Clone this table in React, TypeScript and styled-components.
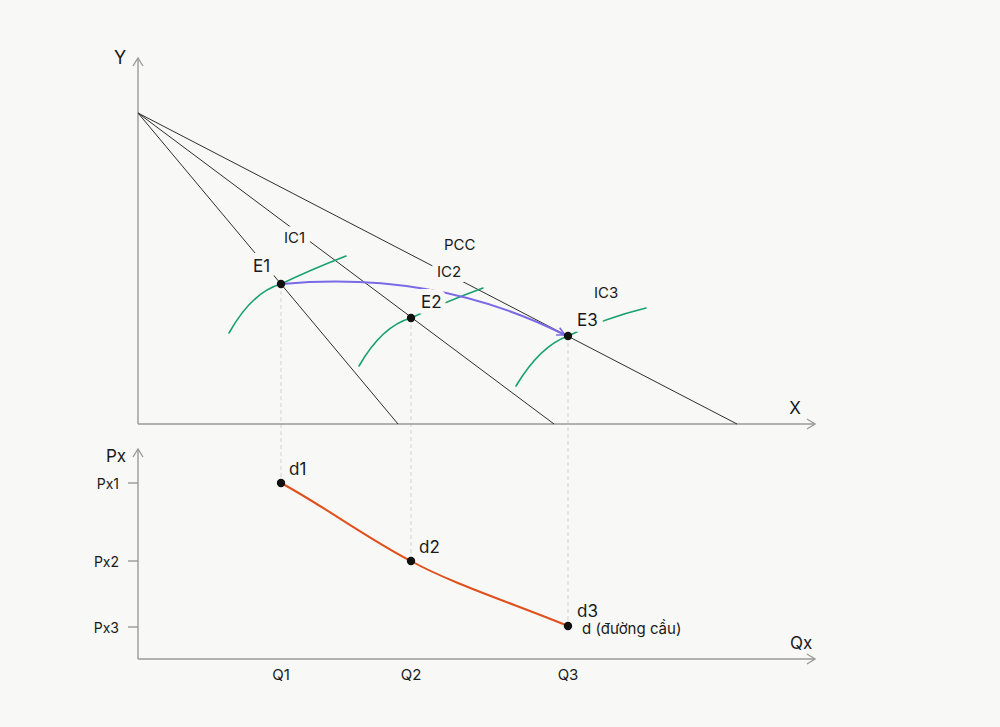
import React from 'react';
import styled, { createGlobalStyle } from 'styled-components';

const BG = '#f8f8f6';

const colors = {
    axis: '#9a9a9a',
    line: '#2e2e2e',
    guide: '#d2d2d2',
    ic: '#17a070',
    pcc: '#7a6ae6',
    demand: '#e0501c',
    dot: '#111111',
    text: '#1a1a1a',
};

const GlobalStyle = createGlobalStyle`
    html, body {
        margin: 0;
        padding: 0;
        background: ${BG};
    }
    body {
        font-family: Inter, "Noto Sans", "Liberation Sans", sans-serif;
    }
`;

// budget lines all start from the same intercept on the Y axis
const ORIGIN = { x: 138, y: 113 };
const budgetEnds = [398, 554, 737];

const equilibria = [
    { name: 'E1', x: 281, y: 284, lx: 253, ly: 272 },
    { name: 'E2', x: 411, y: 318, lx: 421, ly: 308 },
    { name: 'E3', x: 568, y: 336, lx: 577, ly: 326 },
];

const indifference = [
    'M229,333 Q252,292 281,284 Q310,270 346,256',
    'M359,366 Q382,326 411,318 Q445,302 483,288',
    'M516,386 Q540,346 568,336 Q605,318 646,308',
];

const demandPoints = [
    { name: 'd1', x: 281, y: 483, lx: 289, ly: 475 },
    { name: 'd2', x: 411, y: 561, lx: 419, ly: 553 },
    { name: 'd3', x: 568, y: 626, lx: 577, ly: 617 },
];

const priceTicks = [
    { name: 'Px1', y: 483 },
    { name: 'Px2', y: 561 },
    { name: 'Px3', y: 627 },
];

const Page = styled.div`
    width: 1000px;
    height: 727px;
    background: ${BG};
    overflow: hidden;
`;

const Canvas = styled.svg`
    display: block;
    width: 1000px;
    height: 727px;
`;

const Axis = styled.line`
    stroke: ${colors.axis};
    stroke-width: 1.4;
`;

const AxisHead = styled.polyline`
    fill: none;
    stroke: ${colors.axis};
    stroke-width: 1.4;
`;

const BudgetLine = styled.line`
    stroke: ${colors.line};
    stroke-width: 1;
`;

const Guide = styled.line`
    stroke: ${colors.guide};
    stroke-width: 1;
    stroke-dasharray: 4 3;
`;

const Curve = styled.path<{ $color: string; $width?: number }>`
    fill: none;
    stroke: ${(p) => p.$color};
    stroke-width: ${(p) => p.$width ?? 1.6};
    stroke-linecap: round;
`;

const Dot = styled.circle`
    fill: ${colors.dot};
`;

// labels carry a halo of the page colour so they cut the lines under them
const Label = styled.text<{ $size: number; $halo?: boolean }>`
    font-family: Inter, "Noto Sans", "Liberation Sans", sans-serif;
    font-size: ${(p) => p.$size}px;
    fill: ${colors.text};
    paint-order: stroke;
    stroke: ${(p) => (p.$halo ? BG : 'none')};
    stroke-width: ${(p) => (p.$halo ? 12 : 0)};
    stroke-linejoin: round;
`;

const App = (): JSX.Element => {
    return (
        <Page>
            <GlobalStyle />
            <Canvas viewBox="0 0 1000 727">
                <defs>
                    <marker id="pccHead" viewBox="0 0 10 10" refX="9" refY="5" markerWidth="10" markerHeight="10" orient="auto" markerUnits="userSpaceOnUse">
                        <polyline points="1,1 9,5 1,9" fill="none" stroke={colors.pcc} strokeWidth="1.6" />
                    </marker>
                </defs>

                {/* guides from equilibrium down to demand points */}
                {equilibria.map((e, i) => (
                    <Guide key={e.name} x1={e.x} y1={e.y} x2={e.x} y2={demandPoints[i].y} />
                ))}

                {/* upper panel axes */}
                <Axis x1={138} y1={424} x2={138} y2={58} />
                <AxisHead points="133,66 138,58 143,66" />
                <Axis x1={138} y1={424} x2={815} y2={424} />
                <AxisHead points="807,419 815,424 807,429" />

                {budgetEnds.map((end) => (
                    <BudgetLine key={end} x1={ORIGIN.x} y1={ORIGIN.y} x2={end} y2={424} />
                ))}

                {indifference.map((d) => (
                    <Curve key={d} d={d} $color={colors.ic} />
                ))}

                <Curve d="M282,284 Q436,270 565,335" $color={colors.pcc} $width={2} markerEnd="url(#pccHead)" />

                <Label x={120} y={64} $size={18} textAnchor="middle">Y</Label>
                <Label x={795} y={414} $size={17} textAnchor="middle">X</Label>
                <Label x={444} y={250} $size={15} $halo>PCC</Label>
                <Label x={284} y={243} $size={15} $halo>IC1</Label>
                <Label x={437} y={277} $size={15} $halo>IC2</Label>
                <Label x={594} y={298} $size={15} $halo>IC3</Label>

                {equilibria.map((e) => (
                    <React.Fragment key={e.name}>
                        <Label x={e.lx} y={e.ly} $size={17} $halo>{e.name}</Label>
                        <Dot cx={e.x} cy={e.y} r={4.2} />
                    </React.Fragment>
                ))}

                {/* lower panel: demand */}
                <Axis x1={138} y1={659} x2={138} y2={449} />
                <AxisHead points="133,457 138,449 143,457" />
                <Axis x1={138} y1={659} x2={815} y2={659} />
                <AxisHead points="807,654 815,659 807,664" />

                {priceTicks.map((t) => (
                    <React.Fragment key={t.name}>
                        <Axis x1={128} y1={t.y} x2={138} y2={t.y} />
                        <Label x={119} y={t.y + 6} $size={14} textAnchor="end">{t.name}</Label>
                    </React.Fragment>
                ))}

                <Label x={106} y={462} $size={17}>Px</Label>
                <Label x={790} y={649} $size={17}>Qx</Label>

                {equilibria.map((e, i) => (
                    <Label key={e.name} x={e.x} y={680} $size={15} textAnchor="middle">{`Q${i + 1}`}</Label>
                ))}

                <Curve d="M281,483 C322,505 370,540 411,561 C450,583 520,606 568,626" $color={colors.demand} $width={2} />

                {demandPoints.map((d) => (
                    <React.Fragment key={d.name}>
                        <Label x={d.lx} y={d.ly} $size={17}>{d.name}</Label>
                        <Dot cx={d.x} cy={d.y} r={4.2} />
                    </React.Fragment>
                ))}

                <Label x={582} y={634} $size={15}>d (đường cầu)</Label>
            </Canvas>
        </Page>
    );
};

export default App;
